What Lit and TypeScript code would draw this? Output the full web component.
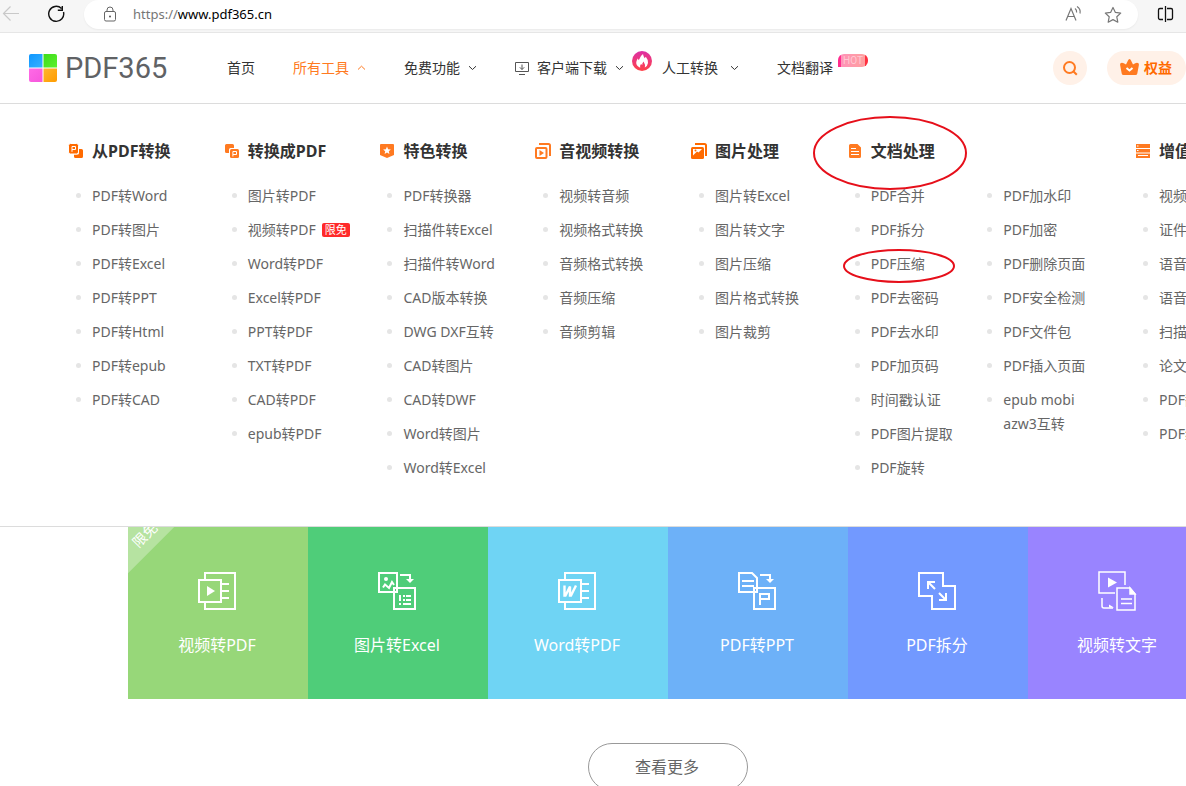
import { LitElement, html, svg, css, type TemplateResult } from "lit";
import { customElement } from "lit/decorators.js";

type Link = { text: string; tag?: string; marked?: boolean };
type Group = { title: string; icon: TemplateResult; lists: Link[][]; marked?: boolean };

const l = (...names: string[]): Link[] => names.map((text) => ({ text }));

const icon = (size: number, body: unknown) =>
  html`<svg width=${size} height=${size} viewBox="0 0 ${size} ${size}" fill="none" aria-hidden="true">${body}</svg>`;

const groupIcons = {
  from: icon(16, svg`<path fill="#ff6a00" d="M10.500 6H13.500a1.500 1.500 0 0 1 1.500 1.500v6a1.500 1.500 0 0 1-1.500 1.500H7.500A1.500 1.500 0 0 1 6 13.500V11.500h3.500a1.500 1.500 0 0 0 1.500-1.500z"/><rect x=".5" y=".5" width="10" height="10.500" rx="2" fill="#ff6a00" stroke="#fff"/><path stroke="#fff" d="M4 8.800V3.500h3.500V6.500H4"/>`),
  to: icon(16, svg`<path fill="#ff7a21" d="M2.500 1h6A1.500 1.500 0 0 1 10 2.500V5H6.500A1.500 1.500 0 0 0 5 6.500V10H2.500A1.500 1.500 0 0 1 1 8.500v-6A1.500 1.500 0 0 1 2.500 1z"/><rect x="6" y="6" width="9" height="9" rx="1.500" fill="#ff7a21"/><path stroke="#fff" d="M8.900 13.500V8.500h3.600v3H9"/>`),
  star: icon(16, svg`<path fill="#ff7a21" d="M1 2a1 1 0 0 1 1-1h12a1 1 0 0 1 1 1v10L8 15 1 12z"/><path fill="#fff" d="M8 3.600l1.100 2.600 2.800.2-2.100 1.900.6 2.700L8 9.600 5.600 11l.6-2.700-2.100-1.900 2.800-.2z"/>`),
  video: icon(16, svg`<path stroke="#ff7a21" stroke-width="2" d="M4 1h9.500A1.500 1.500 0 0 1 15 2.500V13"/><rect x="1" y="5" width="10.500" height="10" rx="1" stroke="#ff7a21" stroke-width="2"/><path fill="#ff7a21" d="M4.500 7v6l4.500-3z"/>`),
  image: icon(16, svg`<path stroke="#ff6a00" stroke-width="2" d="M4 1h9.500A1.500 1.500 0 0 1 15 2.500V13"/><rect y="4" width="13" height="12" rx="1.500" fill="#ff6a00"/><path fill="#fff" d="M2 12.500V6h9L7.500 9.500 6 8.500z"/><circle cx="4.500" cy="7.500" r="1" fill="#ff6a00"/>`),
  doc: icon(16, svg`<path fill="#ff7a21" d="M3.500 1h7L14 4.500v9a1.500 1.500 0 0 1-1.500 1.500h-9A1.500 1.500 0 0 1 2 13.500v-11A1.500 1.500 0 0 1 3.500 1z"/><path stroke="#fff" d="M4 5.500h5M4 8.500h8M4 11.500h8"/>`),
  extra: icon(16, svg`<path fill="#ff7a21" d="M1 1h14v4H1zM1 6h14v3.500H1zM1 10.500h14V15H1z"/><path stroke="#fff" d="M2 3h1.500M2 7.500h1.500M3 12.500h10"/>`),
};

const groups: Group[] = [
  { title: "从PDF转换", icon: groupIcons.from, lists: [l("PDF转Word", "PDF转图片", "PDF转Excel", "PDF转PPT", "PDF转Html", "PDF转epub", "PDF转CAD")] },
  {
    title: "转换成PDF",
    icon: groupIcons.to,
    lists: [[{ text: "图片转PDF" }, { text: "视频转PDF", tag: "限免" }, ...l("Word转PDF", "Excel转PDF", "PPT转PDF", "TXT转PDF", "CAD转PDF", "epub转PDF")]],
  },
  { title: "特色转换", icon: groupIcons.star, lists: [l("PDF转换器", "扫描件转Excel", "扫描件转Word", "CAD版本转换", "DWG DXF互转", "CAD转图片", "CAD转DWF", "Word转图片", "Word转Excel")] },
  { title: "音视频转换", icon: groupIcons.video, lists: [l("视频转音频", "视频格式转换", "音频格式转换", "音频压缩", "音频剪辑")] },
  { title: "图片处理", icon: groupIcons.image, lists: [l("图片转Excel", "图片转文字", "图片压缩", "图片格式转换", "图片裁剪")] },
  {
    title: "文档处理",
    icon: groupIcons.doc,
    marked: true,
    lists: [
      [...l("PDF合并", "PDF拆分"), { text: "PDF压缩", marked: true }, ...l("PDF去密码", "PDF去水印", "PDF加页码", "时间戳认证", "PDF图片提取", "PDF旋转")],
      l("PDF加水印", "PDF加密", "PDF删除页面", "PDF安全检测", "PDF文件包", "PDF插入页面", "epub mobi azw3互转"),
    ],
  },
  { title: "增值服务", icon: groupIcons.extra, lists: [l("视频转文字", "证件照", "语音转文字", "语音翻译", "扫描翻译", "论文查重", "PDF翻译", "PDF编辑")] },
];

const pageLines = svg`<path d="M7 7V1h30v36H7v-6M24 12h7M24 19h7M24 26h7"/><rect x="1" y="8" width="22" height="22"/>`;
const bendArrow = svg`<path d="M22 3h10v5"/><path fill="#fff" stroke="none" d="M28 7h8l-4 4z"/>`;

const tileIcons = {
  video: svg`${pageLines}<path fill="#fff" stroke="none" d="M9 14v10l8-5z"/>`,
  image: svg`<rect x="1" y="1" width="18" height="19"/><circle cx="8" cy="7" r="2" fill="#fff" stroke="none"/><path d="M5 15.500l2-3 4 3.500 3-6 2 3"/>${bendArrow}<rect x="16" y="16" width="21" height="21"/><path d="M21 23h2v6h-2zM21 31h2v2h-2z" fill="#fff" stroke="none"/><path d="M25 24h2M28 24h5M25 28h2M28 28h5M25 32h8"/>`,
  word: svg`${pageLines}<path stroke-width="2.400" d="M6.500 13.500v10h1l4.500-9v9h1l5-10"/>`,
  ppt: svg`<path d="M1 1h13l5 5v14H1zM4 9h12M4 14h12"/>${bendArrow}<rect x="16" y="16" width="21" height="21"/><path d="M22 33V22h9v5h-9"/>`,
  split: svg`<path d="M1 1h24v13h12v23H14V24H1zM10 17v-7h7M10 10l7 7M28 21v7h-7M28 28l-7-7"/>`,
  text: svg`<g stroke-width="1.500"><path d="M27 13V0H1v21h16M4 26v8q0 2 2 2h9"/><path fill="#fff" stroke="none" d="M10 5.500v10l9-5zM11 32.500v3h5z"/><path d="M19 16h13l5 6v16H19zM23 27h11M23 31.500h11"/><path fill="#fff" d="M32 16v6h5z"/></g>`,
};

const tiles = [
  { label: "视频转PDF", cls: "lime", art: tileIcons.video, corner: "限免" },
  { label: "图片转Excel", cls: "green", art: tileIcons.image },
  { label: "Word转PDF", cls: "cyan", art: tileIcons.word },
  { label: "PDF转PPT", cls: "sky", art: tileIcons.ppt },
  { label: "PDF拆分", cls: "blue", art: tileIcons.split },
  { label: "视频转文字", cls: "violet", art: tileIcons.text },
];

const caret = (up = false) =>
  html`<svg class="caret" width="9" height="6" viewBox="0 0 9 6" fill="none" stroke="currentColor" aria-hidden="true"><path d=${up ? "M1 4.500L4.500 1.200 8 4.500" : "M1 1.200L4.500 4.500 8 1.200"} /></svg>`;

@customElement("browser-bar")
class BrowserBar extends LitElement {
  static styles = css`
    :host {
      display: flex;
      align-items: flex-start;
      height: 32px;
      background: #f6f6f6;
      border-bottom: 1px solid #e6e6e6;
      font-family: "Noto Sans", sans-serif;
    }
    button {
      display: block;
      padding: 0;
      border: 0;
      background: none;
      line-height: 0;
    }
    svg { display: block; }
    .tools { display: flex; gap: 26px; padding: 4px 17px 0 1px; }
    .address {
      display: flex;
      flex: 1;
      align-items: center;
      gap: 13px;
      height: 29px;
      padding: 0 15px 0 16px;
      border-radius: 15px;
      background: #fff;
      box-shadow: 0 1px 2px #0000000d;
      font-size: 13px;
    }
    .url { flex: 1; color: #000; line-height: 18px; padding-bottom: 2px; text-decoration: none; }
    .scheme { color: #767676; }
    .actions { display: flex; gap: 20px; }
    .side { padding: 4px 11px 0 17px; }
  `;

  render() {
    return html`
      <div class="tools">
        <button aria-label="后退">${icon(20, svg`<path stroke="#c9c9c9" stroke-width="1.200" d="M18 9.500H2M9.500 2.500l-7 7 7 7"/>`)}</button>
        <button aria-label="刷新">${icon(20, svg`<path stroke="#111" stroke-width="1.400" d="M14.500 4.500A7.500 7.500 0 1 0 16.500 8M15.300 2v4.200h-4.500"/>`)}</button>
      </div>
      <div class="address">
        ${icon(20, svg`<rect x="4.500" y="6.500" width="11" height="9.500" rx="1.500" stroke="#666"/><path stroke="#666" d="M7 6.500V5a3 3 0 0 1 6 0v1.500"/><circle cx="10" cy="11.500" r="1" fill="#555"/>`)}
        <a class="url" href="#"><span class="scheme">https://</span>www.pdf365.cn</a>
        <div class="actions">
          <button aria-label="朗读">${icon(20, svg`<path stroke="#777" stroke-width="1.200" d="M3 15.500L8 3.500l5 12M4.800 11.500h6.400M12 3.500q2 1.500 1.600 4M14 1.500q4 2.500 3 7"/>`)}</button>
          <button aria-label="收藏">${icon(20, svg`<path stroke="#777" stroke-width="1.200" stroke-linejoin="round" d="M10 2.500l2.400 4.900 5.300.7-3.900 3.700 1 5.400L10 14.600l-4.800 2.600 1-5.400L2.300 8.100l5.300-.7z"/>`)}</button>
        </div>
      </div>
      <div class="side">
        <button aria-label="分屏">${icon(20, svg`<path stroke="#111" stroke-width="1.300" d="M8 4.500H5A1.500 1.500 0 0 0 3.500 6v8A1.500 1.500 0 0 0 5 15.500h3M12 4.500h4A1.500 1.500 0 0 1 17.500 6v8a1.500 1.500 0 0 1-1.500 1.500h-4M10.500 2v16"/>`)}</button>
      </div>
    `;
  }
}

@customElement("site-header")
class SiteHeader extends LitElement {
  static styles = css`
    :host {
      display: flex;
      align-items: center;
      height: 70px;
      padding-left: 29px;
      border-bottom: 1px solid #dcdcdc;
      font-size: 14px;
      white-space: nowrap;
    }
    a { color: inherit; text-decoration: none; }
    svg { display: block; flex: none; }
    .logo {
      display: flex;
      align-items: center;
      gap: 8px;
      width: 139px;
      color: #606265;
      font: 400 29px/34px Roboto, sans-serif;
    }
    nav {
      display: flex;
      flex: 1;
      gap: 38px;
      margin-left: 59px;
      color: #333;
    }
    .item { position: relative; display: flex; align-items: center; gap: 8px; line-height: 20px; }
    .active { color: #ff7a21; }
    .roomy { gap: 12px; }
    .flame { position: absolute; top: -7px; left: -30px; }
    .hot {
      position: absolute;
      top: -4px;
      left: 61px;
      width: 30px;
      height: 13px;
      border-radius: 6px 6px 6px 0;
      background: linear-gradient(90deg, #ff2d8e 10%, #ff94b8 11%, #ff9f9f 89%, #ff3040 90%);
      color: #ffc9d3;
      font: 10px/13px Roboto, sans-serif;
      text-align: center;
    }
    .actions { display: flex; gap: 20px; }
    button {
      display: flex;
      align-items: center;
      justify-content: center;
      gap: 5px;
      min-width: 34px;
      height: 34px;
      padding: 0;
      border: 0;
      border-radius: 17px;
      background: #fff1e8;
      color: #ff6a00;
      font: inherit;
      font-weight: 700;
    }
    .perks { padding: 0 14px 2px 13px; }
  `;

  render() {
    return html`
      <a class="logo" href="#">
        <svg width="28" height="28" viewBox="0 0 28 28" aria-hidden="true">
          <defs>
            <linearGradient id="b" x2="1" y2="1"><stop stop-color="#0f97ff" /><stop offset="1" stop-color="#35b0ff" /></linearGradient>
            <linearGradient id="g" x2="1" y2="1"><stop stop-color="#3ddc1c" /><stop offset="1" stop-color="#5cf02c" /></linearGradient>
            <linearGradient id="p" x2="1" y2="1"><stop stop-color="#ff6ae6" /><stop offset="1" stop-color="#f657dc" /></linearGradient>
            <linearGradient id="o" x2="1" y2="1"><stop stop-color="#ffb52e" /><stop offset="1" stop-color="#ff9c00" /></linearGradient>
          </defs>
          <path fill="url(#b)" d="M2 0h11.500v13.500H0V2a2 2 0 0 1 2-2z" />
          <path fill="url(#g)" d="M14.500 0H26a2 2 0 0 1 2 2v11.500H14.500z" />
          <path fill="url(#p)" d="M0 14.500h13.500V28H2a2 2 0 0 1-2-2z" />
          <path fill="url(#o)" d="M14.500 14.500H28V26a2 2 0 0 1-2 2H14.500z" />
        </svg>
        <span>PDF365</span>
      </a>
      <nav>
        <a class="item" href="#">首页</a>
        <a class="item active" href="#">所有工具${caret(true)}</a>
        <a class="item" href="#">免费功能${caret()}</a>
        <a class="item" href="#">
          ${icon(14, svg`<path stroke="#555" d="M.5 1.500h13v9H.5zM4 13.500h6M7 3.500v5M4.800 6.300L7 8.500l2.200-2.200"/>`)}
          客户端下载${caret()}
        </a>
        <a class="item roomy" href="#">
          <svg class="flame" width="20" height="20" viewBox="0 0 20 20" aria-hidden="true">
            <defs><linearGradient id="f" x2="0" y2="1"><stop stop-color="#dd2fa5" /><stop offset="1" stop-color="#ff4248" /></linearGradient></defs>
            <circle cx="10" cy="10" r="10" fill="url(#f)" />
            <path fill="#fff" d="M11 3q.3 2.500 1.700 4.300l1.100-1.500q2.500 3 2.200 6.200-.4 3-3.200 4.500.8-3-1.300-6-1.700 2.200-1.200 3.500L9 13q-1.400 1.500-.8 3.700Q4.500 15 4.200 12q0-2 1.500-4.500l1.100 1.700Q8.500 4.500 11 3z" />
          </svg>
          人工转换${caret()}
        </a>
        <a class="item" href="#">文档翻译<span class="hot">HOT</span></a>
      </nav>
      <div class="actions">
        <button aria-label="搜索">${icon(16, svg`<circle cx="7.500" cy="7.500" r="5.500" stroke="#ff7a21" stroke-width="2"/><path stroke="#ff7a21" stroke-width="2" d="M11.300 11.300l3.500 3.500"/>`)}</button>
        <button class="perks">
          <svg width="19" height="16" viewBox="0 0 19 16" aria-hidden="true">
            <path fill="#ff7a21" d="M9.500 0q1 0 1.500 1.500l2 4q3.500-2.500 5-1.500 1.200.5.800 2.500L17.300 14.500Q17 16 15.500 16h-12Q2 16 1.700 14.500L.2 6.500Q-.2 4.500 1 4q1.500-1 5 1.500l2-4Q8.500 0 9.500 0z" />
            <path fill="none" stroke="#fff" stroke-width="2" d="M6.500 9l3 2.500 3-2.500" />
          </svg>
          权益
        </button>
      </div>
    `;
  }
}

@customElement("tool-menu")
class ToolMenu extends LitElement {
  static styles = css`
    :host {
      display: block;
      padding: 35px 0 46px 68px;
      border-bottom: 1px solid #dcdcdc;
      font-size: 14px;
      line-height: 24px;
    }
    .groups { display: flex; }
    .group { flex: 0 0 13.93%; white-space: nowrap; }
    .double { flex-basis: 25.8%; }
    h2 {
      position: relative;
      display: flex;
      align-items: center;
      gap: 8px;
      margin: 0 0 21px;
      color: #333;
      font-size: 16px;
      line-height: 24px;
    }
    h2 svg { display: block; flex: none; }
    .lists { display: flex; }
    .list { display: grid; align-content: start; gap: 10px; margin: 0; padding: 0; list-style: none; }
    .double .list { flex: 0 0 46%; }
    .row { position: relative; display: flex; color: #666; }
    .row::before {
      content: "";
      flex: none;
      width: 5px;
      height: 5px;
      margin: 9px 11px 0 8px;
      border-radius: 50%;
      background: #e5e5e5;
    }
    .double a { max-width: 90px; white-space: normal; }
    a { color: inherit; text-decoration: none; }
    .tag {
      align-self: center;
      margin-left: 6px;
      padding: 0 3px;
      border-radius: 2px;
      background: #ff2a2a;
      color: #fff;
      font-size: 11px;
      line-height: 14px;
    }
    .ring { position: absolute; fill: none; stroke: #e60f1a; stroke-width: 2; pointer-events: none; }
    h2 .ring { top: -23px; left: -34px; }
    .row .ring { top: -3px; left: -4px; }
  `;

  render() {
    return html`<div class="groups">
      ${groups.map(
        (g) => html`<section class="group ${g.lists.length > 1 ? "double" : ""}">
          <h2>${g.icon}${g.title}${g.marked ? html`<svg class="ring" width="154" height="74"><ellipse cx="77" cy="37" rx="76" ry="36" /></svg>` : ""}</h2>
          <div class="lists">
            ${g.lists.map(
              (links) => html`<ul class="list">
                ${links.map(
                  (k) => html`<li class="row"><a href="#">${k.text}</a>${k.tag ? html`<span class="tag">${k.tag}</span>` : ""}${k.marked ? html`<svg class="ring" width="112" height="34"><ellipse cx="56" cy="17" rx="55" ry="16" /></svg>` : ""}</li>`,
                )}
              </ul>`,
            )}
          </div>
        </section>`,
      )}
    </div>`;
  }
}

@customElement("tool-tiles")
class ToolTiles extends LitElement {
  static styles = css`
    :host { display: block; padding-left: 128px; }
    .inner { width: 1080px; }
    .tiles { display: grid; grid-template-columns: repeat(6, 1fr); }
    .tile {
      position: relative;
      display: flex;
      flex-direction: column;
      align-items: center;
      gap: 23px;
      padding: 45px 2px 42px 0;
      overflow: hidden;
      color: #fff;
      font-size: 16px;
      line-height: 24px;
      text-decoration: none;
    }
    .art { display: block; overflow: visible; fill: none; stroke: #fff; stroke-width: 2; }
    .lime { background: #97d779; }
    .green { background: #4fcd79; }
    .cyan { background: #6fd4f4; }
    .sky { background: #6db1f8; }
    .blue { background: #7299ff; }
    .violet { background: #9984ff; }
    .corner {
      position: absolute;
      top: -14px;
      left: -42px;
      width: 112px;
      padding: 9px 8px 4px 0;
      background: #ffffff4d;
      font-size: 14px;
      line-height: 22px;
      text-align: center;
      transform: rotate(-45deg);
    }
    .more {
      display: block;
      height: 48px;
      margin: 44px auto 32px;
      padding: 0 48px 2px 46px;
      border: 1px solid #999;
      border-radius: 24px;
      background: #fff;
      color: #666;
      font: inherit;
      font-size: 16px;
    }
  `;

  render() {
    return html`<div class="inner">
      <div class="tiles">
        ${tiles.map(
          (t) => html`<a class="tile ${t.cls}" href="#">
            ${t.corner ? html`<span class="corner">${t.corner}</span>` : ""}
            <svg class="art" width="38" height="38" viewBox="0 0 38 38" aria-hidden="true">${t.art}</svg>
            <span>${t.label}</span>
          </a>`,
        )}
      </div>
      <button class="more">查看更多</button>
    </div>`;
  }
}

@customElement("app-root")
class AppRoot extends LitElement {
  static styles = css`
    :host {
      display: block;
      min-height: 100vh;
      overflow-x: clip;
      background: #fff;
      font-family: "Noto Sans", "Noto Sans CJK SC", sans-serif;
    }
  `;

  render() {
    return html`<browser-bar></browser-bar><site-header></site-header><tool-menu></tool-menu><tool-tiles></tool-tiles>`;
  }
}
